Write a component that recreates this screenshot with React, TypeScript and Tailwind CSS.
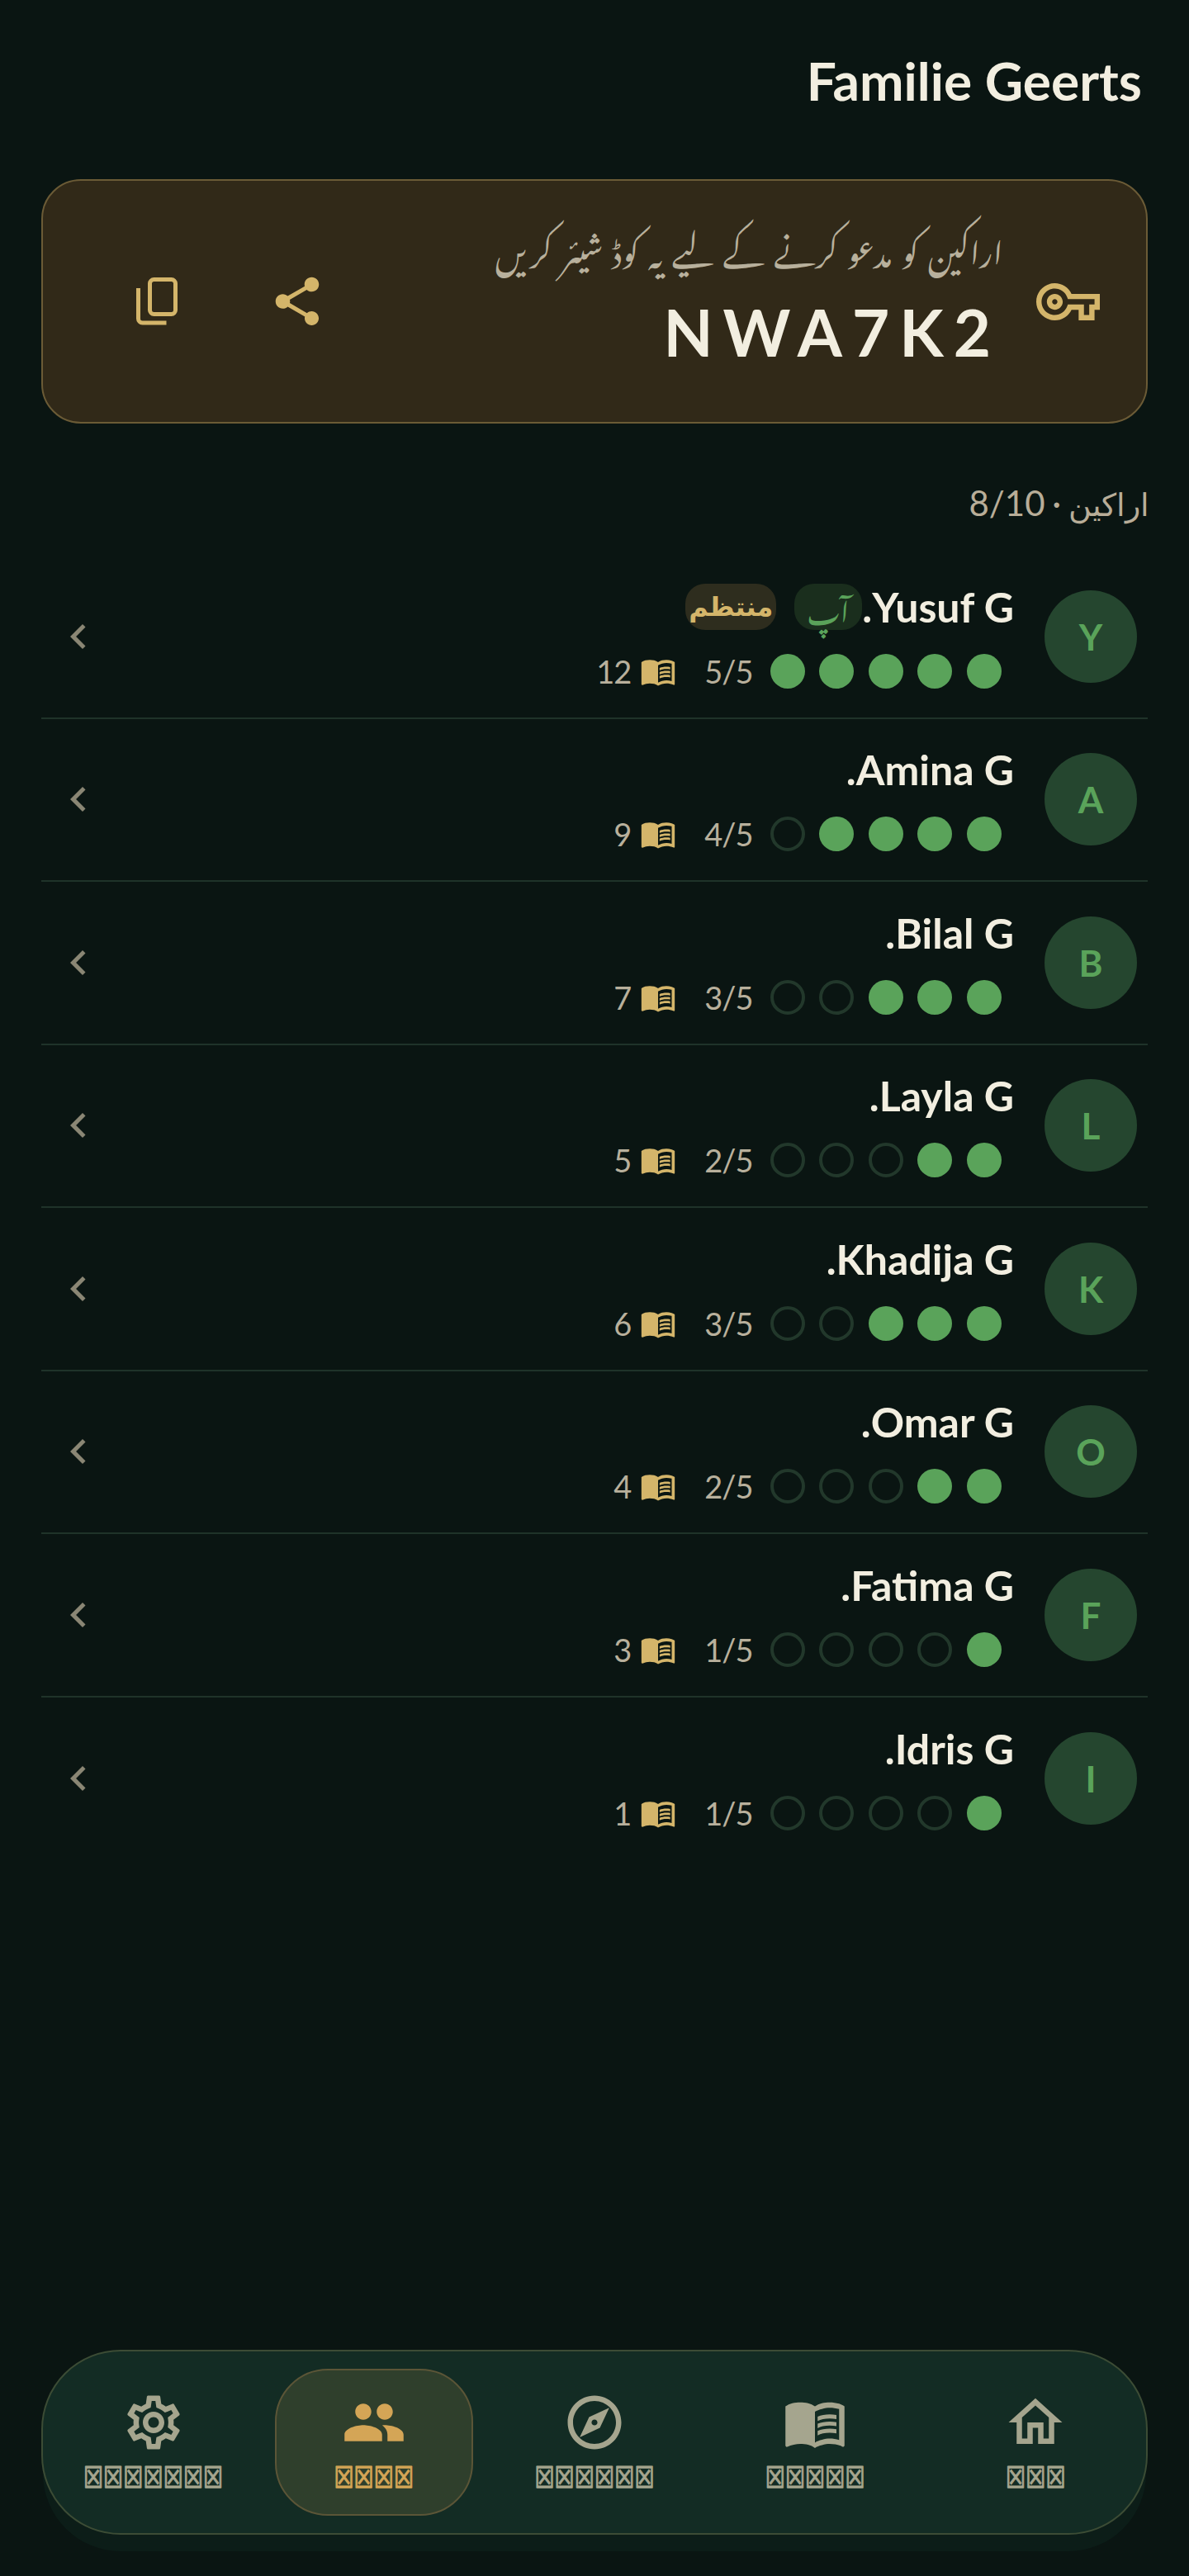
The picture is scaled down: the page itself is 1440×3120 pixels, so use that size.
import {
  MdChevronLeft,
  MdGroup,
  MdMenuBook,
  MdOutlineExplore,
  MdOutlineHome,
  MdOutlineSettings,
  MdOutlineVpnKey,
  MdShare,
} from "react-icons/md";

const urdu = '"Noto Nastaliq Urdu", "DejaVu Sans", sans-serif';

const members = [
  { name: "Yusuf G.", done: 5, books: 12, me: true },
  { name: "Amina G.", done: 4, books: 9 },
  { name: "Bilal G.", done: 3, books: 7 },
  { name: "Layla G.", done: 2, books: 5 },
  { name: "Khadija G.", done: 3, books: 6 },
  { name: "Omar G.", done: 2, books: 4 },
  { name: "Fatima G.", done: 1, books: 3 },
  { name: "Idris G.", done: 1, books: 1 },
];

// labels show as missing-glyph boxes in the design, the real word stays in aria-label
const tabs = [
  { label: "گھر", Icon: MdOutlineHome },
  { label: "پڑھیں", Icon: MdMenuBook },
  { label: "دریافت", Icon: MdOutlineExplore },
  { label: "کنبہ", Icon: MdGroup, active: true },
  { label: "ترتیبات", Icon: MdOutlineSettings },
];

function CopyIcon() {
  return (
    <svg viewBox="0 0 50 58" fill="none" stroke="currentColor" strokeWidth="5" className="h-[58px] w-[50px]">
      <rect x="16.5" y="2.5" width="31" height="42" rx="5" />
      <path d="M2.5 13v37a5 5 0 0 0 5 5h29" />
    </svg>
  );
}

function MemberRow({ name, done, books, me }: { name: string; done: number; books: number; me?: boolean }) {
  return (
    <div className="flex h-[197.5px] items-center border-b-2 border-[#1f3329] pr-[13px] last:border-b-0">
      <div className="flex h-[112px] w-[112px] shrink-0 items-center justify-center rounded-full bg-[#25462f] text-[44px] font-bold text-[#5aa35a]">
        {name[0]}
      </div>
      <div className="mr-[37px] flex flex-col gap-[28px]">
        <div className="flex h-[56px] items-center">
          <span className="text-[50px] leading-none font-bold text-[#f2eee0]">{name}</span>
          {me && (
            <>
              <span
                className="flex h-[56px] w-[82px] items-center justify-center rounded-[24px] bg-[#1a2e1d] text-[34px] text-[#5aa35a]"
                style={{ fontFamily: urdu }}
              >
                آپ
              </span>
              <span
                className="mr-[22px] flex h-[56px] w-[110px] items-center justify-center rounded-[24px] bg-[#2e2d1e] text-[32px] font-bold text-[#d4b56a]"
                style={{ fontFamily: '"DejaVu Sans", sans-serif' }}
              >
                منتظم
              </span>
            </>
          )}
        </div>
        <div className="flex items-center pr-[15.5px]">
          <div className="flex gap-[17.5px]">
            {[0, 1, 2, 3, 4].map((i) =>
              i < done ? (
                <span key={i} className="h-[42px] w-[42px] rounded-full bg-[#5aa35a]" />
              ) : (
                <span key={i} className="h-[42px] w-[42px] rounded-full border-4 border-[#22382b]" />
              )
            )}
          </div>
          <span className="mr-[21px] text-[38px] leading-[42px] tracking-[-1px] text-[#b8b09c]">{done}/5</span>
          <MdMenuBook className="mr-[34px] h-[44px] w-[44px] text-[#d4b56a]" />
          <span className="mr-[11px] text-[38px] leading-[42px] tracking-[-1px] text-[#b8b09c]">{books}</span>
        </div>
      </div>
      <MdChevronLeft className="mr-auto ml-[15px] h-[60px] w-[60px] text-[#8a8674]" />
    </div>
  );
}

export default function App() {
  return (
    <div dir="rtl" className="flex h-[3120px] flex-col bg-[#0a1512] px-[50px]" style={{ fontFamily: "Lato, sans-serif" }}>
      <h1 className="mr-[7px] pt-[58px] text-[64px] leading-[80px] font-bold text-[#f2eee0]" style={{ direction: "ltr", textAlign: "right" }}>
        Familie Geerts
      </h1>

      <section className="mt-[79px] flex h-[296px] items-center rounded-[48px] border-2 border-[#6b5b36] bg-[#312918] pr-[56px] pl-[103px]">
        <MdOutlineVpnKey className="h-[77px] w-[77px] shrink-0 text-[#d4b56a]" />
        <div className="mr-[40px] flex flex-col gap-[24px]">
          <p className="-mt-[8px] mb-[8px] text-[38px] leading-[50px] [word-spacing:6px] text-[#b8b09c]" style={{ fontFamily: urdu }}>
            اراکین کو مدعو کرنے کے لیے یہ کوڈ شیئر کریں
          </p>
          <p className="pr-[3px] text-[78px] leading-[90px] font-bold tracking-[12px] text-[#f2eee0]" style={{ direction: "ltr", textAlign: "right" }}>
            NWA7K2
          </p>
        </div>
        <div className="mr-auto flex items-center gap-[100px]">
          <MdShare className="h-[70px] w-[70px] text-[#d4b56a]" />
          <span className="flex w-[70px] justify-center text-[#d4b56a]">
            <CopyIcon />
          </span>
        </div>
      </section>

      <p className="mt-[66px] -mr-[2px] h-[60px] text-[42px] leading-[60px] [word-spacing:-2px] text-[#b8ad98]">
        <span className="text-[38px]">اراکین</span> · 8/10
      </p>

      <div className="mt-[34px] flex flex-col">
        {members.map((m) => (
          <MemberRow key={m.name} {...m} />
        ))}
      </div>

      <nav className="mt-auto mb-[50px] flex h-[224px] shrink-0 items-center rounded-[96px] border-2 border-[#3c4c35] bg-[#132c24] shadow-[0_22px_0_-2px_#0c1d18]">
        {tabs.map(({ label, Icon, active }) => (
          <div key={label} className="flex flex-1 justify-center">
            <div
              className={
                active
                  ? "flex h-[178px] w-[240px] flex-col items-center justify-center rounded-[64px] border-2 border-[#5b5537] bg-[#2f3f2c] text-[#d4a556]"
                  : "flex h-[178px] w-[240px] flex-col items-center justify-center text-[#a5a58e]"
              }
            >
              <Icon className="h-[78px] w-[78px]" />
              <span
                aria-label={label}
                className="mt-[8px] inline-block scale-y-[1.3] text-[27px] leading-[40px] font-bold [-webkit-text-stroke:1px_currentColor]"
                style={{ fontFamily: '"DejaVu Sans", sans-serif' }}
              >
                {"\u2612".repeat(label.length)}
              </span>
            </div>
          </div>
        ))}
      </nav>
    </div>
  );
}
